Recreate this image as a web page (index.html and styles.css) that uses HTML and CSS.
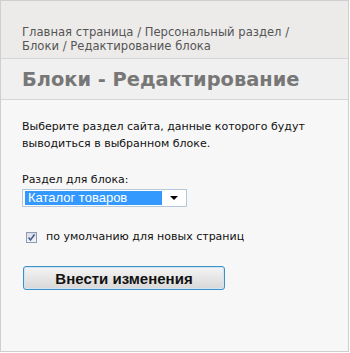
FILE: index.html
```html
<!DOCTYPE html>
<html lang="ru">
<head>
    <meta charset="UTF-8">
    <title>Блоки - Редактирование</title>
    <link rel="stylesheet" href="styles.css">
</head>
<body>
<div class="panel">
    <div class="breadcrumbs">
        <a href="#">Главная страница</a> / <a href="#">Персональный раздел</a> /<br>
        <a href="#">Блоки</a> / <span>Редактирование блока</span>
    </div>

    <h1 class="page-title">Блоки - Редактирование</h1>

    <div class="content">
        <p class="intro">Выберите раздел сайта, данные которого будут выводиться в выбранном блоке.</p>

        <div class="field">
            <div class="field-label">Раздел для блока:</div>
            <div class="select">
                <span class="select-value">Каталог товаров</span>
                <span class="select-arrow"></span>
            </div>
        </div>

        <label class="check">
            <span class="check-box">
                <svg width="9" height="9" viewBox="0 0 9 9"><path d="M1.5 4.5 L3.5 7 L7.5 1.5" fill="none" stroke="#4a5f8c" stroke-width="1.6"/></svg>
            </span>
            по умолчанию для новых страниц
        </label>

        <button class="submit">Внести изменения</button>
    </div>
</div>
</body>
</html>
```

FILE: styles.css
```css
body {
    margin: 0;
    font-family: "DejaVu Sans", Tahoma, sans-serif;
    font-size: 11px;
    color: #111;
}

.panel {
    width: 347px;
    height: 350px;
    border: 1px solid #cfcfcf;
    background-color: #f7f7f7;
}

.breadcrumbs {
    background-color: #ecebea;
    border-bottom: 1px solid #d6d6d6;
    padding: 24px 20px 5px 21px;
    font-size: 11.6px;
    line-height: 14px;
    color: #555;
}

.breadcrumbs a {
    color: #555;
    text-decoration: none;
}

.page-title {
    margin: 0;
    background-color: #f0f0f0;
    border-bottom: 1px solid #d6d6d6;
    padding: 10px 21px 8px;
    font-size: 19.4px;
    line-height: 22px;
    color: #777;
}

.content {
    padding: 18px 21px;
}

.intro {
    margin: 0 0 21px;
    line-height: 17px;
}

.field-label {
    line-height: 14px;
    margin-bottom: 2px;
}

.select {
    display: flex;
    align-items: center;
    width: 159px;
    height: 14px;
    padding: 1px 2px;
    border: 1px solid #b4c8da;
    background-color: #fff;
}

.select-value {
    width: 134px;
    height: 14px;
    line-height: 14px;
    padding-left: 3px;
    background-color: #3399ff;
    color: #fff;
    font-family: "Liberation Sans", Arial, sans-serif;
    font-size: 13px;
}

.select-arrow {
    margin-left: 8px;
    width: 0;
    height: 0;
    border-left: 4px solid transparent;
    border-right: 4px solid transparent;
    border-top: 4px solid #000;
}

.check {
    display: flex;
    align-items: center;
    margin: 23px 0 0 4px;
    line-height: 14px;
}

.check-box {
    display: flex;
    align-items: center;
    justify-content: center;
    width: 9px;
    height: 9px;
    margin-right: 9px;
    border: 1px solid #8f9bb3;
    background: linear-gradient(#d9dde6, #f3f4f7);
}

.submit {
    display: block;
    margin-top: 22px;
    margin-left: 1px;
    width: 202px;
    height: 24px;
    border: 1px solid #3d8fc4;
    border-radius: 3px;
    background: linear-gradient(#f4f4f4, #e6e6e6 50%, #d8d8d8);
    box-shadow: inset 0 0 0 1px #cfe6f5;
    font-family: "Liberation Sans", Arial, sans-serif;
    font-size: 15px;
    font-weight: bold;
    color: #111;
    padding: 0;
}
```
